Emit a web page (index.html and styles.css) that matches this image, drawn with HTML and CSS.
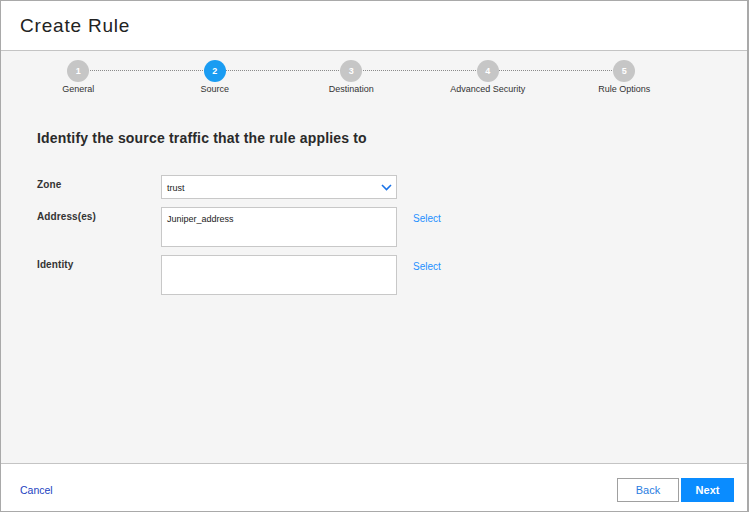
FILE: index.html
```html
<!DOCTYPE html>
<html>
<head>
<meta charset="utf-8">
<link rel="stylesheet" href="styles.css">
</head>
<body>
<div class="dialog">
  <header class="header">
    <h1 class="title">Create Rule</h1>
  </header>
  <main class="body">
    <ol class="stepper">
      <li class="step"><span class="dot">1</span><span class="label">General</span></li>
      <li class="step active"><span class="dot">2</span><span class="label">Source</span></li>
      <li class="step"><span class="dot">3</span><span class="label">Destination</span></li>
      <li class="step"><span class="dot">4</span><span class="label">Advanced Security</span></li>
      <li class="step last"><span class="dot">5</span><span class="label">Rule Options</span></li>
    </ol>
    <h2 class="heading">Identify the source traffic that the rule applies to</h2>
    <div class="form">
      <div class="field-label">Zone</div>
      <div class="select">
        <span class="select-value">trust</span>
        <svg class="chev" width="11" height="7" viewBox="0 0 11 7"><path d="M1 1 L5.5 5.5 L10 1" fill="none" stroke="#1a73e8" stroke-width="1.6"/></svg>
      </div>
      <div></div>
      <div class="field-label">Address(es)</div>
      <div class="box">Juniper_address</div>
      <a class="link">Select</a>
      <div class="field-label">Identity</div>
      <div class="box"></div>
      <a class="link">Select</a>
    </div>
  </main>
  <footer class="footer">
    <a class="cancel">Cancel</a>
    <div class="buttons">
      <button class="btn back">Back</button>
      <button class="btn next">Next</button>
    </div>
  </footer>
</div>
</body>
</html>
```
FILE: styles.css
```css
* { box-sizing: border-box; }
html, body { margin: 0; padding: 0; }
body { font-family: "Liberation Sans", Arial, sans-serif; color: #222; }
.dialog {
  width: 749px; height: 512px;
  border: 1px solid #a9a9a9; border-right-width: 2px;
  display: flex; flex-direction: column;
  background: #f5f5f5;
}
.header {
  height: 50px; background: #fff;
  border-bottom: 1px solid #c4c4c4;
  display: flex; align-items: center;
  padding-left: 19px;
}
.title {
  margin: 0; font-size: 19px; font-weight: normal;
  letter-spacing: 0.8px; color: #222;
  padding-top: 1px;
}
.body { flex: 1; padding: 9px 0 0 0; }
.stepper {
  list-style: none; margin: 0; padding: 0 0 0 9px;
  display: flex;
}
.step {
  width: 136.5px; position: relative;
  display: flex; flex-direction: column; align-items: center;
}
.step::after {
  content: ""; position: absolute;
  left: 50%; width: 100%; top: 10px;
  border-top: 1px dotted #8a8a8a;
  z-index: 0;
}
.step.last::after { display: none; }
.dot {
  position: relative; z-index: 1;
  width: 22px; height: 22px; border-radius: 50%;
  background: #c6c6c6; color: #fff;
  font-size: 9px; font-weight: bold;
  display: flex; align-items: center; justify-content: center;
}
.step.active .dot { background: #1a9cf2; }
.label { font-size: 9px; color: #333; margin-top: 2px; }
.heading {
  margin: 36px 0 0 36px;
  font-size: 14px; font-weight: bold; color: #2a2a2a;
  letter-spacing: 0.18px;
}
.form {
  margin: 29px 0 0 36px;
  display: grid;
  grid-template-columns: 108px 236px auto;
  column-gap: 16px; row-gap: 8px;
  align-items: start;
}
.field-label { font-size: 10px; font-weight: bold; color: #333; padding-top: 4px; letter-spacing: 0.1px; }
.select {
  height: 24px; background: #fff; border: 1px solid #c8c8c8;
  display: flex; align-items: center; justify-content: space-between;
  padding: 1px 4px 0 5px;
}
.select-value { font-size: 9px; color: #222; }
.chev { display: block; }
.box {
  height: 40px; background: #fff; border: 1px solid #c8c8c8;
  font-size: 9px; padding: 6px 5px; color: #222;
}
.link { font-size: 10px; color: #1e90ff; padding-top: 6px; }
.footer {
  height: 48px; background: #fff; border-top: 1px solid #c4c4c4;
  display: flex; align-items: center; justify-content: space-between;
  padding: 5px 13px 0 19px;
}
.cancel { font-size: 10.5px; color: #1c3fbf; }
.buttons { display: flex; gap: 2px; }
.btn {
  height: 24px; font-family: inherit; font-size: 11px;
  border-radius: 0; padding: 0; cursor: pointer;
}
.back { width: 62px; background: #fff; border: 1px solid #a0a0a0; color: #2a7de1; }
.next { width: 53px; background: #0a8cff; border: 1px solid #0a8cff; color: #fff; font-weight: bold; }
```
